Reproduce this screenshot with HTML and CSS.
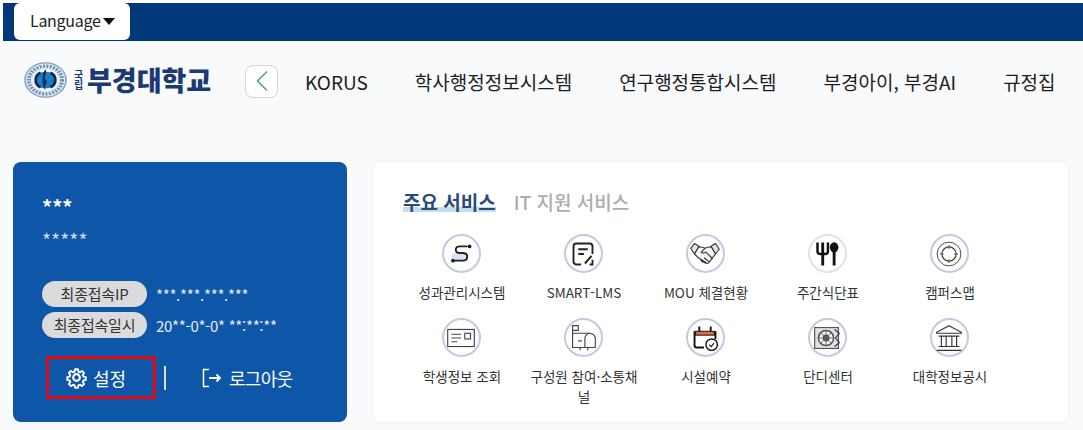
FILE: index.html
```html
<!DOCTYPE html>
<html lang="ko">
<head>
    <meta charset="UTF-8">
    <meta name="viewport" content="width=device-width, initial-scale=1.0">
    <title>부경대학교 포털</title>
    <link rel="stylesheet" href="styles.css">
</head>
<body>
    <div class="top-bar">
        <button class="lang-btn">Language<span class="caret"></span></button>
    </div>

    <div class="page">
        <header class="nav">
            <div class="logo">
                <svg class="logo-mark" width="43" height="36" viewBox="0 0 44 44" preserveAspectRatio="none">
                    <circle cx="22" cy="22" r="21" fill="#dfe9f2" stroke="#7fa3c6" stroke-width="1.500"/>
                    <circle cx="22" cy="22" r="17" fill="none" stroke="#6f8db0" stroke-width="4" stroke-dasharray="2 1.500"/>
                    <circle cx="22" cy="22" r="13" fill="#fff"/>
                    <circle cx="22" cy="22" r="10.500" fill="#1b7fc4"/>
                    <path d="M22 9 C18 14 18 29 22 35 C20 27 26 25 22 21 C20 17 24 14 22 9Z" fill="#0f2a58"/>
                    <path d="M12 22a10 10 0 0 0 5 9M32 22a10 10 0 0 1-5 9M12 22a10 10 0 0 1 5-9M32 22a10 10 0 0 0-5-9" fill="none" stroke="#0f2a58" stroke-width="3"/>
                </svg>
                <span class="logo-small">국립</span>
                <span class="logo-name">부경대학교</span>
            </div>
            <button class="back-btn">
                <svg width="14" height="22" viewBox="0 0 14 22"><path d="M12 1.500 2.500 11 12 20.500" fill="none" stroke="#4f9a9c" stroke-width="1.500"/></svg>
            </button>
            <nav class="nav-links">
                <a>KORUS</a>
                <a>학사행정정보시스템</a>
                <a>연구행정통합시스템</a>
                <a>부경아이, 부경AI</a>
                <a>규정집</a>
            </nav>
        </header>

        <main class="content">
            <section class="profile">
                <div class="user-name">***</div>
                <div class="user-dept">*****</div>
                <div class="info-row info-first"><span class="pill">최종접속IP</span><span class="info-value">***.***.***.***</span></div>
                <div class="info-row"><span class="pill">최종접속일시</span><span class="info-value">20**-0*-0* **:**:**</span></div>
                <div class="profile-actions">
                    <a class="action action-settings">
                        <svg width="23" height="23" viewBox="0 0 24 24" fill="none" stroke="#fff" stroke-width="2.200" stroke-linejoin="round">
                            <path d="M10.300 2.500h3.400l.5 2.700 1.900.8 2.300-1.600 2.400 2.400-1.600 2.300.8 1.900 2.700.5v3.400l-2.700.5-.8 1.900 1.600 2.300-2.400 2.400-2.300-1.600-1.900.8-.5 2.700h-3.400l-.5-2.700-1.900-.8-2.300 1.600-2.400-2.400 1.600-2.300-.8-1.900-2.700-.5v-3.400l2.700-.5.8-1.900-1.600-2.300 2.400-2.400 2.300 1.600 1.900-.8z" transform="translate(1.200 1.200) scale(.9)"/>
                            <circle cx="12" cy="12" r="3.500"/>
                        </svg>
                        <span>설정</span>
                    </a>
                    <span class="action-divider"></span>
                    <a class="action action-logout">
                        <svg width="20" height="20" viewBox="0 0 20 20" fill="none" stroke="#fff" stroke-width="1.500">
                            <path d="M7 1.500H1.500v17H7"/>
                            <path d="M7 10h11M14.500 6.500 18 10l-3.500 3.500" stroke-width="1.800"/>
                        </svg>
                        <span>로그아웃</span>
                    </a>
                </div>
            </section>

            <section class="services">
                <div class="tabs">
                    <a class="tab tab-active">주요 서비스</a>
                    <a class="tab">IT 지원 서비스</a>
                </div>
                <div class="service-grid">
                    <a class="service">
                        <span class="icon">
                            <svg width="26" height="26" viewBox="0 0 26 26" fill="none" stroke="#222" stroke-width="2">
                                <ellipse cx="11" cy="16" rx="8" ry="5" fill="#d6e4f6" stroke="none"/>
                                <path d="M19 5h-7c-6 0-6 7 0 7h3c6 0 6 8 0 8H6" stroke-linecap="round"/>
                                <circle cx="22" cy="5" r="2" fill="#222" stroke="none"/>
                                <circle cx="4.500" cy="20" r="2" fill="#222" stroke="none"/>
                            </svg>
                        </span>
                        <span class="label">성과관리시스템</span>
                    </a>
                    <a class="service">
                        <span class="icon">
                            <svg width="24" height="26" viewBox="0 0 24 26" fill="none" stroke="#222" stroke-width="2">
                                <path d="M10 24H5a3 3 0 0 1-3-3V5a3 3 0 0 1 3-3h14a3 3 0 0 1 3 3v8M22 19v5h-3"/>
                                <path d="M7 8h10M7 13h6"/>
                                <path d="M14 23 21 15"/>
                            </svg>
                        </span>
                        <span class="label">SMART-LMS</span>
                    </a>
                    <a class="service">
                        <span class="icon">
                            <svg width="34" height="28" viewBox="0 0 34 28" fill="none" stroke="#333" stroke-width="1.200" stroke-linejoin="round">
                                <path d="M2 8 6 3l5 3-5 8zM32 9 28 3l-5 3 5 8z" fill="#e4e5ea"/>
                                <path d="M10 7c3-1 5 0 7 1 2-1 4-2 7-1l4 7-7 9c-1 1-2 1-3 0l-8-5-4-4z" fill="#f4f4f6"/>
                                <path d="M17 8l-4 4c1 2 3 1 5 0l7 7M15 23l-3-3M18 24l-4-3M21 22l-5-4"/>
                            </svg>
                        </span>
                        <span class="label">MOU 체결현황</span>
                    </a>
                    <a class="service">
                        <span class="icon icon-plain">
                            <svg width="26" height="28" viewBox="0 0 26 28" fill="#111" stroke="#111">
                                <path d="M3 2v9c0 2 1 3 3 3h5c2 0 3-1 3-3V2" fill="none" stroke-width="2.600"/>
                                <path d="M8.500 2v24" fill="none" stroke-width="3"/>
                                <ellipse cx="20.500" cy="7" rx="4.500" ry="5.500" stroke="none"/>
                                <path d="M20.500 10v16" fill="none" stroke-width="3"/>
                            </svg>
                        </span>
                        <span class="label">주간식단표</span>
                    </a>
                    <a class="service">
                        <span class="icon">
                            <svg width="28" height="28" viewBox="0 0 28 28" fill="none" stroke="#444" stroke-width="1">
                                <circle cx="14" cy="14" r="12.500"/>
                                <circle cx="14" cy="14" r="7.500" stroke-width="1.300"/>
                                <path d="M14 4.500v4M14 19.500v4M4.500 14h4M19.500 14h4"/>
                            </svg>
                        </span>
                        <span class="label">캠퍼스맵</span>
                    </a>

                    <a class="service">
                        <span class="icon">
                            <svg width="30" height="24" viewBox="0 0 30 24" fill="none" stroke="#444" stroke-width="1.200">
                                <rect x="1" y="3" width="28" height="18"/>
                                <path d="M5 8h10M5 12h10M5 16h6"/>
                                <rect x="19" y="7" width="6" height="6"/>
                            </svg>
                        </span>
                        <span class="label">학생정보 조회</span>
                    </a>
                    <a class="service">
                        <span class="icon">
                            <svg width="30" height="30" viewBox="0 0 30 30" fill="none" stroke="#444" stroke-width="1.200">
                                <path d="M4 14V2h6v5H4"/>
                                <path d="M4 11v14h24V16a6 6 0 0 0-6-6H4"/>
                                <path d="M22 10a6 6 0 0 0-5 6v9M10 18h4M12 25v3M20 25v3"/>
                            </svg>
                        </span>
                        <span class="label">구성원 참여·소통채널</span>
                    </a>
                    <a class="service">
                        <span class="icon">
                            <svg width="30" height="30" viewBox="0 0 30 30" fill="none" stroke="#111" stroke-width="2">
                                <path d="M5 8h20v4H5z" fill="#d9704a" stroke="#4a2a20" stroke-width="1.500"/>
                                <path d="M9 3v5M21 3v5"/>
                                <path d="M14 25H6a2 2 0 0 1-2-2V8M26 8v8"/>
                                <circle cx="22" cy="22" r="6" fill="#fff" stroke-width="1.500"/>
                                <path d="M19.500 22l2 2 3-3.500" stroke-width="1.200"/>
                            </svg>
                        </span>
                        <span class="label">시설예약</span>
                    </a>
                    <a class="service">
                        <span class="icon">
                            <svg width="30" height="28" viewBox="0 0 30 28" fill="none" stroke="#555" stroke-width="1.200">
                                <rect x="2" y="3" width="25" height="22" fill="#dfe0e2"/>
                                <circle cx="14" cy="14" r="8" fill="#f3f3f3" stroke-width="1.600"/>
                                <circle cx="14" cy="14" r="3" fill="#666"/>
                                <path d="M14 6v16M6 14h16M8.500 8.500l11 11M19.500 8.500l-11 11" stroke-width=".8"/>
                                <path d="M23 5l5 4-4 5 4 5-5 4" stroke="#333"/>
                            </svg>
                        </span>
                        <span class="label">단디센터</span>
                    </a>
                    <a class="service">
                        <span class="icon">
                            <svg width="30" height="30" viewBox="0 0 30 30" fill="none" stroke="#333" stroke-width="1.200">
                                <path d="M15 2 28 9v1H2V9z"/>
                                <path d="M4 13h22M7 13v11M12 13v11M18 13v11M23 13v11M4 24h22M2 28h26"/>
                            </svg>
                        </span>
                        <span class="label">대학정보공시</span>
                    </a>
                </div>
            </section>
        </main>
    </div>
</body>
</html>
```

FILE: styles.css
```css
* {
    box-sizing: border-box;
}
html, body {
    height: 100%;
}
body {
    margin: 0;
    padding: 3px 0 0 3px;
    overflow: hidden;
    background: #fff;
    font-family: "Noto Sans CJK KR", "Noto Sans", sans-serif;
    color: #222;
}
a {
    color: inherit;
    text-decoration: none;
}
.top-bar {
    height: 38px;
    padding-left: 11px;
    background: #00387a;
}
.lang-btn {
    display: flex;
    align-items: center;
    width: 116px;
    height: 37px;
    padding: 0 0 4px 16px;
    border: none;
    border-radius: 6px;
    background: #fff;
    font-family: inherit;
    font-size: 16px;
    letter-spacing: -0.3px;
    color: #222;
}
.caret {
    width: 0;
    height: 0;
    margin-left: 3px;
    margin-top: 3px;
    border-left: 6.500px solid transparent;
    border-right: 6.500px solid transparent;
    border-top: 7px solid #111;
}
.page {
    height: 389px;
    margin-left: -3px;
    padding: 0 15px 0 13px;
    background: #f9fafc;
}
.nav {
    display: flex;
    align-items: center;
    height: 80px;
}
.logo {
    display: flex;
    align-items: center;
    width: 232px;
    margin-left: 11px;
    margin-top: -2px;
}
.logo-mark {
    flex: none;
}
.logo-small {
    flex: none;
    width: 14px;
    margin-left: 4px;
    writing-mode: vertical-rl;
    text-orientation: upright;
    font-size: 10px;
    font-weight: 700;
    line-height: 14px;
    color: #1c3a72;
}
.logo-name {
    flex: none;
    margin-left: 2px;
    font-size: 27px;
    font-weight: 900;
    line-height: 30px;
    white-space: nowrap;
    color: #1c3a72;
}
.back-btn {
    display: flex;
    align-items: center;
    justify-content: center;
    flex: none;
    width: 33px;
    height: 33px;
    margin-left: -11px;
    padding: 0;
    border: 1.500px solid #d4d4d6;
    border-radius: 8px;
    background: #fff;
}
.nav-links {
    display: flex;
    gap: 47px;
    margin-left: 27px;
    font-size: 19px;
    white-space: nowrap;
    color: #1d1d1f;
}
.content {
    display: flex;
    gap: 26px;
    margin-top: 41px;
}
.profile {
    flex: none;
    width: 334px;
    height: 260px;
    padding: 32px 29px 0 29px;
    border-radius: 8px;
    background: #0e57a8;
    color: #fff;
}
.user-name {
    font-size: 20px;
    font-weight: 700;
    line-height: 26px;
}
.user-dept {
    margin-top: 7px;
    font-size: 19.500px;
    line-height: 26px;
    color: #cfdcec;
}
.info-row {
    display: flex;
    align-items: center;
    height: 26px;
    margin-top: 5px;
}
.info-first {
    margin-top: 28px;
}
.pill {
    flex: none;
    width: 105px;
    height: 26px;
    border-radius: 13px;
    background: #dbdbdd;
    font-size: 15px;
    line-height: 26px;
    text-align: center;
    letter-spacing: -0.2px;
    color: #333;
}
.info-value {
    margin-left: 9px;
    font-size: 15px;
    letter-spacing: -0.3px;
    color: #e3ebf5;
}
.profile-actions {
    display: flex;
    align-items: center;
    height: 43px;
    margin-top: 18px;
    margin-left: 4px;
}
.action {
    display: flex;
    align-items: center;
    font-size: 18px;
    color: #fff;
}
.action-settings {
    width: 110px;
    height: 43px;
    gap: 5px;
    padding-left: 19px;
    border: 3.500px solid #e30613;
}
.action-settings svg {
    margin-left: -3px;
}
.action-divider {
    width: 2px;
    height: 24px;
    margin-left: 8px;
    background: #d5e0ee;
}
.action-logout {
    gap: 7px;
    margin-left: 36px;
    letter-spacing: -0.7px;
}
.services {
    flex: none;
    width: 695px;
    height: 260px;
    padding: 26px 0 0 30px;
    border-radius: 8px;
    background: #fff;
    box-shadow: 0 0 4px rgba(0, 0, 0, 0.06);
}
.tabs {
    display: flex;
    gap: 18px;
    height: 28px;
}
.tab {
    font-size: 19px;
    font-weight: 500;
    line-height: 27px;
    white-space: nowrap;
    color: #a9adb3;
}
.tab-active {
    font-weight: 700;
    color: #2b4a78;
    background: linear-gradient(transparent 19px, #bfe0ea 19px, #bfe0ea 24px, transparent 24px);
}
.service-grid {
    display: grid;
    grid-template-columns: repeat(5, 122px);
    grid-auto-rows: 84px;
    margin-top: 18px;
    margin-left: -2px;
}
.service {
    display: flex;
    flex-direction: column;
    align-items: center;
    padding: 0 5px;
}
.icon {
    display: flex;
    align-items: center;
    justify-content: center;
    flex: none;
    width: 39px;
    height: 39px;
    margin-right: 2px;
    border: 2px solid #c3c9e0;
    border-radius: 50%;
    background: #fff;
}
.icon svg {
    flex: none;
    transform: scale(0.95);
}
.icon-plain {
    border-color: #e2e2e4;
}
.label {
    margin-top: 9px;
    font-size: 13.500px;
    line-height: 20px;
    text-align: center;
    word-break: break-all;
    color: #333;
}
```
